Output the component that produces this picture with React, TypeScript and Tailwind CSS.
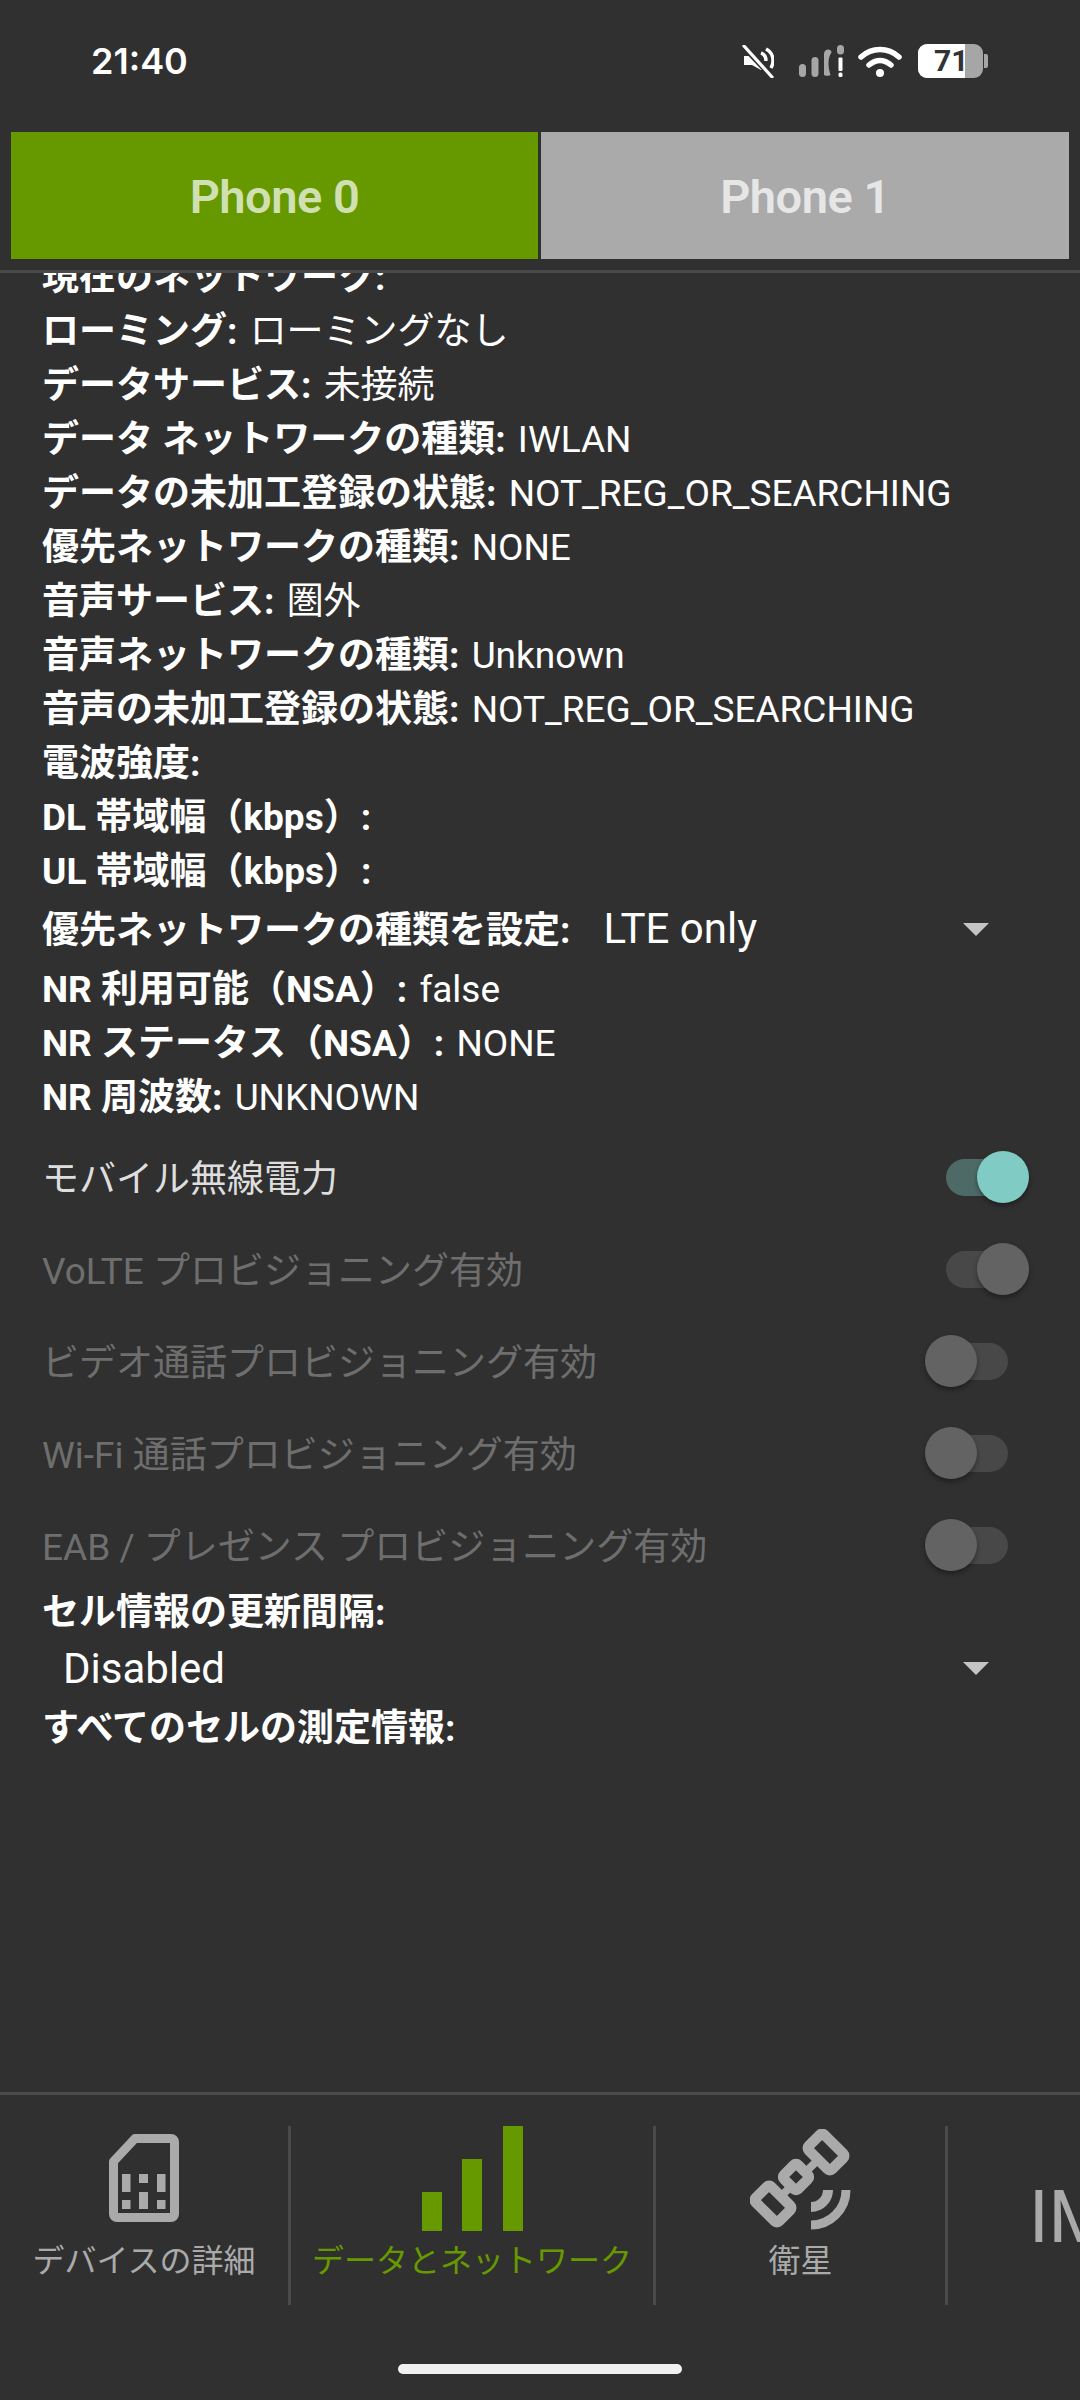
import React from "react";

const infoRows = [
  { label: "ローミング:", value: "ローミングなし" },
  { label: "データサービス:", value: "未接続" },
  { label: "データ ネットワークの種類:", value: "IWLAN" },
  { label: "データの未加工登録の状態:", value: "NOT_REG_OR_SEARCHING" },
  { label: "優先ネットワークの種類:", value: "NONE" },
  { label: "音声サービス:", value: "圏外" },
  { label: "音声ネットワークの種類:", value: "Unknown" },
  { label: "音声の未加工登録の状態:", value: "NOT_REG_OR_SEARCHING" },
  { label: "電波強度:", value: "" },
  { label: "DL 帯域幅（kbps）:", value: "" },
  { label: "UL 帯域幅（kbps）:", value: "" },
];

const nrRows = [
  { label: "NR 利用可能（NSA）:", value: "false" },
  { label: "NR ステータス（NSA）:", value: "NONE" },
  { label: "NR 周波数:", value: "UNKNOWN" },
];

const switches = [
  { label: "モバイル無線電力", on: true, disabled: false },
  { label: "VoLTE プロビジョニング有効", on: true, disabled: true },
  { label: "ビデオ通話プロビジョニング有効", on: false, disabled: true },
  { label: "Wi-Fi 通話プロビジョニング有効", on: false, disabled: true },
  { label: "EAB / プレゼンス プロビジョニング有効", on: false, disabled: true },
];

const InfoRow = ({ label, value }: { label: string; value: string }) => (
  <div className="h-[54px] whitespace-nowrap text-[37px] leading-[54px] text-white">
    <span className="font-bold">{label}</span>
    {value && <span className="ml-[3px]"> {value}</span>}
  </div>
);

const Arrow = () => (
  <div className="h-0 w-0 border-x-[13px] border-t-[13px] border-x-transparent border-t-[#c4c4c4]" />
);

const Toggle = ({ on, disabled }: { on: boolean; disabled: boolean }) => {
  const track = disabled ? "bg-[#484848]" : "bg-[#4e6a66]";
  const thumb = disabled ? "bg-[#636363]" : "bg-[#80cbc4]";
  return (
    <div className={`relative h-[37px] w-[62px] rounded-full ${track}`}>
      <div
        className={`absolute top-[-8px] h-[52px] w-[52px] rounded-full shadow-[0_3px_5px_rgba(0,0,0,0.35)] ${thumb} ${
          on ? "right-[-21px]" : "left-[-21px]"
        }`}
      />
    </div>
  );
};

const MuteIcon = () => (
  <svg width="32" height="33" viewBox="0 0 32 33" fill="none">
    <path d="M2 11h6l3-2 11 12v3l-3 1-9-5H2z" fill="#fff" />
    <path d="M19 8c3 1 5 4 5 8M24 4c4 2 7 6 7 12 0 3-1 5-2 7" stroke="#fff" strokeWidth="3.4" />
    <path d="M3 2l27 29" stroke="#303030" strokeWidth="7" />
    <path d="M2 1l28 31" stroke="#fff" strokeWidth="3.2" strokeLinecap="round" />
  </svg>
);

const SignalIcon = () => (
  <svg width="46" height="33" viewBox="0 0 46 33" fill="#a6a6a6">
    <rect x="0" y="19" width="7" height="13" rx="3.5" />
    <rect x="12.500" y="12" width="7" height="20" rx="3.500" />
    <path d="M25 30V9c0-3 2-4.500 4-4.500s3.500 1 3.500 3c-2 3-3 6-3 11s1 8 2 11.500c-1 1-5.500 1-6.500 0z" />
    <rect x="38" y="0" width="7" height="9.500" rx="3.500" />
    <rect x="39.500" y="12.500" width="4" height="13.500" rx="1" fill="#fff" />
    <rect x="39.500" y="27.500" width="4" height="4.500" rx="1.500" fill="#fff" />
  </svg>
);

const WifiIcon = () => (
  <svg width="44" height="33" viewBox="0 0 44 33" fill="none" stroke="#fff" strokeLinecap="round">
    <path d="M3 12C14 2 30 2 41 12" strokeWidth="5.5" />
    <path d="M11 20c7-6 15-6 22 0" strokeWidth="5.5" />
    <circle cx="22" cy="28" r="4" fill="#fff" stroke="none" />
  </svg>
);

const Battery = () => (
  <div className="flex items-center gap-[1px]">
    <div className="relative flex h-[34px] w-[65px] overflow-hidden rounded-[9px] bg-[#a6a6a6]">
      <div className="h-full w-[47px] bg-white" />
      <span className="absolute left-[16px] top-0 text-[30px] font-bold leading-[34px] text-[#333]">71</span>
    </div>
    <div className="h-[14px] w-[4px] rounded-r-[2px] bg-[#a6a6a6]" />
  </div>
);

const SimIcon = () => (
  <svg width="70" height="88" viewBox="0 0 70 88" fill="none">
    <path
      d="M26 4.500H62a3.500 3.500 0 0 1 3.500 3.500v72a3.500 3.500 0 0 1-3.500 3.500H8a3.500 3.500 0 0 1-3.500-3.500V27.500z"
      stroke="#aaa"
      strokeWidth="9"
      strokeLinejoin="round"
    />
    <g fill="#aaa">
      <rect x="13" y="40" width="8.500" height="18" />
      <rect x="13" y="66" width="8.500" height="9" />
      <rect x="30" y="40" width="9" height="9" />
      <rect x="30" y="58" width="9" height="17" />
      <rect x="48" y="40" width="8.500" height="18" />
      <rect x="48" y="66" width="8.500" height="9" />
    </g>
  </svg>
);

const BarsIcon = () => (
  <svg width="101" height="105" viewBox="0 0 101 105" fill="#669900">
    <rect x="0" y="66" width="20" height="39" />
    <rect x="40" y="33" width="20" height="72" />
    <rect x="81" y="0" width="20" height="105" />
  </svg>
);

const SatelliteIcon = () => (
  <svg width="102" height="102" viewBox="0 0 102 102" fill="none">
    <path d="M23 75L76 23" stroke="#aaa" strokeWidth="8" />
    <g stroke="#aaa" strokeWidth="10.500" fill="#303030" strokeLinejoin="round">
      <rect x="-16.500" y="-11" width="33" height="22" rx="3" transform="translate(76 23) rotate(45)" />
      <rect x="-10" y="-10" width="20" height="20" rx="3" transform="translate(46 48) rotate(45)" />
      <rect x="-16.500" y="-11" width="33" height="22" rx="3" transform="translate(23 75) rotate(45)" />
    </g>
    <g stroke="#aaa">
      <path d="M96 61a35 35 0 0 1-35 35" strokeWidth="9" />
      <path d="M78 61a17 17 0 0 1-17 17" strokeWidth="10" />
    </g>
  </svg>
);

const NavItem = ({
  width,
  icon,
  label,
  active,
}: {
  width: string;
  icon: React.ReactNode;
  label: string;
  active?: boolean;
}) => (
  <div className={`flex h-[179px] shrink-0 flex-col items-center border-r-[3px] border-[#4a4a4a] ${width}`}>
    <div className="flex h-[105px] items-end justify-center">{icon}</div>
    <div className={`mt-[7px] whitespace-nowrap text-[32px] leading-[46px] ${active ? "text-[#669900]" : "text-[#aaaaaa]"}`}>
      {label}
    </div>
  </div>
);

export default function App() {
  return (
    <div
      className="flex h-[2400px] w-[1080px] flex-col overflow-hidden bg-[#303030]"
      style={{ fontFamily: 'Roboto, "Noto Sans CJK JP", sans-serif' }}
    >
      {/* ステータスバー */}
      <div className="flex h-[132px] shrink-0 items-start pl-[91px] pr-[92px] pt-[39px]">
        <div className="font-['Inter'] text-[36px] font-semibold leading-[44px] text-white">21:40</div>
        <div className="ml-auto flex items-center pt-[5px]">
          <MuteIcon />
          <div className="ml-[25px]">
            <SignalIcon />
          </div>
          <div className="ml-[13px]">
            <WifiIcon />
          </div>
          <div className="ml-[16px]">
            <Battery />
          </div>
        </div>
      </div>

      {/* Phone タブ */}
      <div className="flex h-[127px] shrink-0 gap-[3px] pl-[11px] pr-[11px]">
        <div className="flex w-[527px] items-center justify-center bg-[#669900] pt-[3px] text-[47px] font-semibold tracking-[-0.5px] text-[#d1e0b3]">
          Phone 0
        </div>
        <div className="flex flex-1 items-center justify-center bg-[#aaaaaa] pt-[3px] text-[47px] font-semibold tracking-[-0.5px] text-[#e6e6e6]">
          Phone 1
        </div>
      </div>

      <div className="mt-[11px] h-[3px] shrink-0 bg-[#4a4a4a]" />

      {/* スクロール領域 */}
      <div className="min-h-0 flex-1 overflow-hidden pl-[42px]">
        <div className="-mt-[22px]">
          <InfoRow label="現在のネットワーク:" value="" />
          {infoRows.map((row) => (
            <InfoRow key={row.label} label={row.label} value={row.value} />
          ))}
          <div className="flex h-[64px] items-center pr-[91px] text-white">
            <span className="text-[37px] font-bold">優先ネットワークの種類を設定:</span>
            <span className="mb-[5px] ml-[33px] text-[42px]">LTE only</span>
            <div className="mb-[3px] ml-auto">
              <Arrow />
            </div>
          </div>
          {nrRows.map((row) => (
            <InfoRow key={row.label} label={row.label} value={row.value} />
          ))}
          <div className="mt-[6px]">
            {switches.map((s) => (
              <div key={s.label} className="flex h-[92px] items-center pr-[72px]">
                <span className={`mt-[6px] text-[37px] ${s.disabled ? "text-[#6e6e6e]" : "text-[#dedede]"}`}>{s.label}</span>
                <div className="ml-auto">
                  <Toggle on={s.on} disabled={s.disabled} />
                </div>
              </div>
            ))}
          </div>
          <div className="-mt-[5px]">
            <InfoRow label="セル情報の更新間隔:" value="" />
          </div>
          <div className="flex h-[62px] items-center pb-[6px] pl-[21px] pr-[91px] text-[42px] text-white">
            Disabled
            <div className="ml-auto">
              <Arrow />
            </div>
          </div>
          <InfoRow label="すべてのセルの測定情報:" value="" />
        </div>
      </div>

      {/* 下部ナビ */}
      <div className="flex h-[308px] shrink-0 flex-col border-t-[3px] border-[#4a4a4a]">
        <div className="flex flex-1 overflow-hidden pt-[31px]">
          <NavItem width="w-[291px]" icon={<div className="pb-[9px]"><SimIcon /></div>} label="デバイスの詳細" />
          <NavItem width="w-[365px]" icon={<BarsIcon />} label="データとネットワーク" active />
          <NavItem width="w-[292px]" icon={<SatelliteIcon />} label="衛星" />
          <div className="ml-[81px] h-[179px] shrink-0 whitespace-nowrap pt-[50px] text-[72px] leading-[84px] text-[#aaaaaa]">
            IMS
          </div>
        </div>
        <div className="flex h-[36px] shrink-0 justify-center">
          <div className="h-[10px] w-[284px] rounded-full bg-[#f0f0f0]" />
        </div>
      </div>
    </div>
  );
}
